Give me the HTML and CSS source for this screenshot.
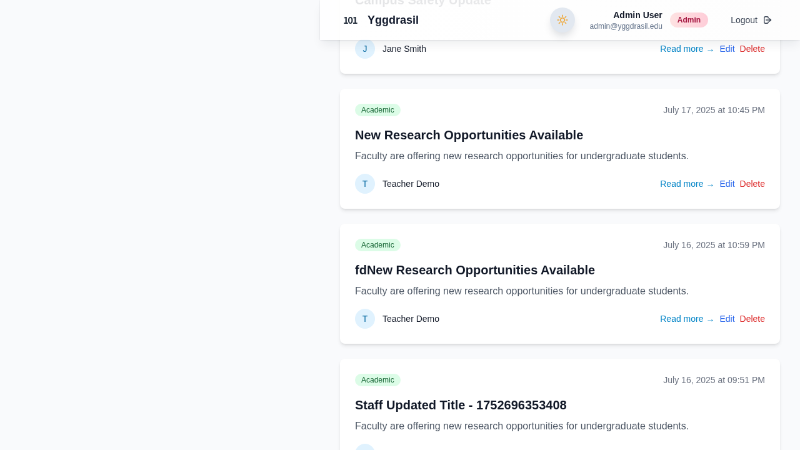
FILE: index.html
```
<!DOCTYPE html>
<html lang="en">
<head>
<meta charset="utf-8">
<title>Yggdrasil</title>
<link rel="stylesheet" href="styles.css">
</head>
<body>
<div class="viewport">
<div class="app">
<header class="topbar">
  <div class="brand"><span class="brand-mark">101</span><span class="brand-name">Yggdrasil</span></div>
  <div class="theme-toggle">
    <svg viewBox="0 0 24 24" class="sun"><circle cx="12" cy="12" r="4.5"/><path d="M12 1.5v3M12 19.5v3M1.5 12h3M19.5 12h3M4.6 4.6l2.1 2.1M17.3 17.3l2.1 2.1M4.6 19.4l2.1-2.1M17.3 6.7l2.1-2.1"/></svg>
  </div>
  <div class="user"><div class="user-name">Admin User</div><div class="user-mail">admin@yggdrasil.edu</div></div>
  <span class="role">Admin</span>
  <div class="logout"><span>Logout</span>
    <svg viewBox="0 0 24 24" class="exit"><path d="M14 7V5.500A2.500 2.500 0 0 0 11.500 3h-6A2.500 2.500 0 0 0 3 5.500v13A2.500 2.500 0 0 0 5.500 21h6a2.500 2.500 0 0 0 2.500-2.500V17M8 12h13M17.500 8l4 4-4 4"/></svg>
  </div>
</header>
<main class="feed">
  <article class="card">
    <div class="row meta"></div>
    <h2>Campus Safety Update</h2>
    <p></p>
    <div class="row foot"><div class="author"><span class="avatar">J</span><span>Jane Smith</span></div><div class="actions"><a class="read">Read more →</a><a class="edit">Edit</a><a class="delete">Delete</a></div></div>
  </article>
  <article class="card">
    <div class="row meta"><span class="tag">Academic</span><span class="date">July 17, 2025 at 10:45 PM</span></div>
    <h2>New Research Opportunities Available</h2>
    <p>Faculty are offering new research opportunities for undergraduate students.</p>
    <div class="row foot"><div class="author"><span class="avatar">T</span><span>Teacher Demo</span></div><div class="actions"><a class="read">Read more →</a><a class="edit">Edit</a><a class="delete">Delete</a></div></div>
  </article>
  <article class="card">
    <div class="row meta"><span class="tag">Academic</span><span class="date">July 16, 2025 at 10:59 PM</span></div>
    <h2>fdNew Research Opportunities Available</h2>
    <p>Faculty are offering new research opportunities for undergraduate students.</p>
    <div class="row foot"><div class="author"><span class="avatar">T</span><span>Teacher Demo</span></div><div class="actions"><a class="read">Read more →</a><a class="edit">Edit</a><a class="delete">Delete</a></div></div>
  </article>
  <article class="card">
    <div class="row meta"><span class="tag">Academic</span><span class="date">July 16, 2025 at 09:51 PM</span></div>
    <h2>Staff Updated Title - 1752696353408</h2>
    <p>Faculty are offering new research opportunities for undergraduate students.</p>
    <div class="row foot"><div class="author"><span class="avatar"></span></div></div>
  </article>
</main>
</div>
</div>
</body>
</html>
```
FILE: styles.css
```
* { box-sizing: border-box; }
body {
  margin: 0;
  background: #f9fafc;
}
.viewport {
  width: 100%;
  height: 450px;
  overflow: clip;
}
.app {
  width: 1280px;
  height: 720px;
  overflow: clip;
  transform: scale(.625);
  transform-origin: 0 0;
  will-change: transform;
  background: #f9fafc;
  color: #111827;
  font-family: "Liberation Sans", Arial, sans-serif;
  font-size: 14px;
  line-height: 20px;
}
.topbar {
  position: fixed;
  top: 0;
  left: 512px;
  right: 0;
  z-index: 2;
  height: 64px;
  padding: 0 44px 0 37px;
  display: flex;
  align-items: center;
  background: linear-gradient(90deg, rgba(255,255,255,.88), rgba(253,253,253,.96));
  box-shadow: 0 0 2px rgba(15,23,42,.12), 0 10px 16px -3px rgba(15,23,42,.07), 0 3px 6px -3px rgba(15,23,42,.05);
}
.brand { display: flex; align-items: center; gap: 18px; margin-right: auto; }
.brand-mark { width: 21px; font: 700 15px/20px "Noto Sans CJK JP", sans-serif; letter-spacing: -1.5px; color: #1f2937; }
.brand-name { font-size: 18px; line-height: 28px; font-weight: 700; color: #0f172a; }
.theme-toggle {
  width: 40px;
  height: 40px;
  border-radius: 50%;
  display: grid;
  place-items: center;
  background: #e2e8f0;
  box-shadow: 0 8px 14px -3px rgba(15,23,42,.16);
  margin-right: 24px;
}
.sun { width: 18px; height: 18px; fill: none; stroke: #f0a32b; stroke-width: 2; stroke-linecap: round; }
.user { text-align: right; margin-right: 12px; padding-top: 2px; }
.user-name { font-weight: 700; line-height: 18px; }
.user-mail { font-size: 12px; line-height: 18px; color: #64748b; }
.role {
  padding: 4px 12px;
  border-radius: 16px;
  background: linear-gradient(90deg, #fee2e2, #fecdd8);
  color: #a51640;
  font-size: 12px;
  line-height: 16px;
  font-weight: 700;
  margin-right: 36px;
}
.logout { display: flex; align-items: center; gap: 8px; color: #374151; }
.exit { width: 16px; height: 14px; fill: none; stroke: #374151; stroke-width: 2.4; stroke-linecap: round; stroke-linejoin: round; }
.feed {
  margin: -73.6px 32px 0 544px;
  display: flex;
  flex-direction: column;
  gap: 24px;
}
.card {
  height: 192px;
  flex: none;
  padding: 24px;
  background: #fff;
  border-radius: 8px;
  box-shadow: 0 4px 6px -1px rgba(0,0,0,.1), 0 2px 4px -2px rgba(0,0,0,.1);
}
.app { display: flow-root; }
.row { display: flex; align-items: center; justify-content: space-between; }
.meta { height: 20px; margin-bottom: 16px; }
.tag {
  padding: 2px 10px;
  border-radius: 12px;
  background: #dcfce7;
  color: #166534;
  font-size: 12px;
  line-height: 16px;
}
.date { color: #6b7280; }
h2 { margin: 0 0 8px; font-size: 20px; line-height: 28px; font-weight: 700; }
p { margin: 0 0 16px; height: 24px; font-size: 16px; line-height: 24px; color: #4b5563; }
.foot { height: 32px; }
.author { display: flex; align-items: center; gap: 12px; }
.avatar {
  width: 32px;
  height: 32px;
  border-radius: 50%;
  background: #e0f2fe;
  color: #0369a1;
  display: grid;
  place-items: center;
}
.actions { display: flex; gap: 8px; }
.read { color: #0284c7; }
.edit { color: #2563eb; }
.delete { color: #dc2626; }
```
